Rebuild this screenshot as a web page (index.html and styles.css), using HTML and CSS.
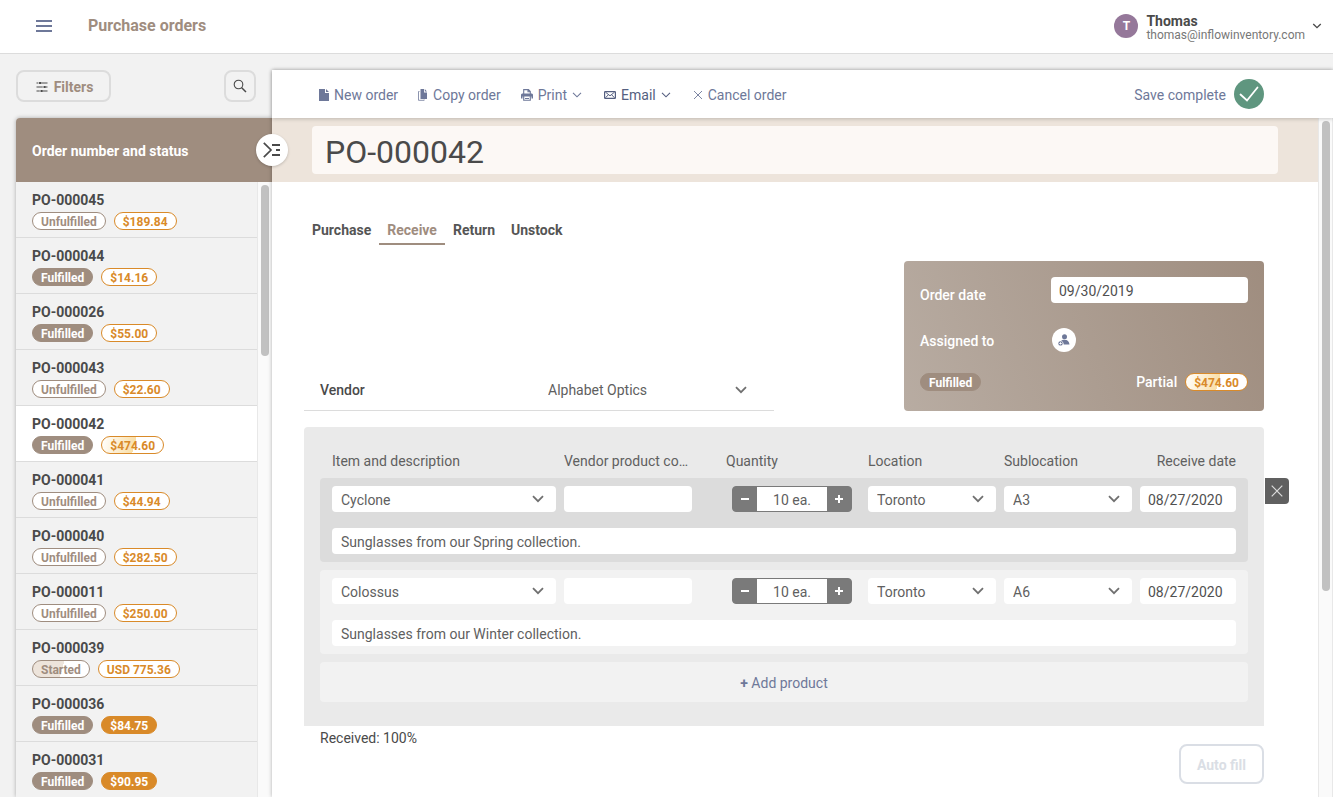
FILE: index.html
```html
<!DOCTYPE html>
<html lang="en">

<head>
    <meta charset="UTF-8">
    <meta name="viewport" content="width=device-width, initial-scale=1.0">
    <title>Purchase orders</title>
    <link rel="stylesheet" href="styles.css">
</head>

<body>
    <!-- shared icons -->
    <svg class="sprite" aria-hidden="true">
        <symbol id="chevron" viewBox="0 0 12 8">
            <path d="M1 1.2 6 6.2 11 1.2" fill="none" stroke="currentColor" stroke-width="1.8" />
        </symbol>
        <symbol id="chevron-thin" viewBox="0 0 10 6">
            <path d="M1 .8 5 4.8 9 .8" fill="none" stroke="currentColor" stroke-width="1.1" />
        </symbol>
        <symbol id="cross" viewBox="0 0 12 12">
            <path d="M.7.7 11.3 11.3M11.3.7.7 11.3" fill="none" stroke="currentColor" stroke-width="1.2" />
        </symbol>
        <symbol id="minus" viewBox="0 0 8 8">
            <path d="M0 4h8" stroke="currentColor" stroke-width="2" />
        </symbol>
        <symbol id="plus" viewBox="0 0 8 8">
            <path d="M0 4h8M4 0v8" stroke="currentColor" stroke-width="2" />
        </symbol>
    </svg>

    <header class="topbar">
        <button class="menu-btn" aria-label="Menu">
            <svg width="16" height="12" viewBox="0 0 16 12"><path d="M0 1h16M0 6h16M0 11h16" stroke="currentColor" stroke-width="2" /></svg>
        </button>
        <h1>Purchase orders</h1>
        <button class="user">
            <span class="avatar">T</span>
            <span class="user-info">
                <strong>Thomas</strong>
                <span class="email">thomas@inflowinventory.com</span>
            </span>
            <svg class="user-chevron" width="10" height="6"><use href="#chevron" /></svg>
        </button>
    </header>

    <div class="container">
        <aside>
            <div class="search-bar">
                <button class="outline-btn filter-btn">
                    <svg width="12" height="10" viewBox="0 0 12 10">
                        <path d="M.5 1h11M.5 5h11M.5 9h11" stroke="#4a4a4a" stroke-width="1.1" />
                        <path d="M4 0v2M8.5 4v2M5.5 8v2" stroke="#4a4a4a" stroke-width="2" />
                        <path d="M2.6 0v2M7.1 4v2M4.1 8v2" stroke="#f2f2f2" stroke-width="0.6" />
                    </svg>
                    Filters
                </button>
                <button class="outline-btn search-btn" aria-label="Search">
                    <svg width="14" height="14" viewBox="0 0 14 14" fill="none" stroke="#4a4a4a">
                        <circle cx="5.5" cy="5.5" r="4.3" stroke-width="1.1" />
                        <path d="m8.7 8.7 4.3 4.3" stroke-width="1.5" />
                    </svg>
                </button>
            </div>
            <div class="list-panel">
                <h2>Order number and status</h2>
                <div class="list-body">
                    <ul class="orders">
                        <li><a href="#"><b>PO-000045</b><span class="pills"><span class="pill brown">Unfulfilled</span><span class="pill orange">$189.84</span></span></a></li>
                        <li><a href="#"><b>PO-000044</b><span class="pills"><span class="pill brown full">Fulfilled</span><span class="pill orange">$14.16</span></span></a></li>
                        <li><a href="#"><b>PO-000026</b><span class="pills"><span class="pill brown full">Fulfilled</span><span class="pill orange">$55.00</span></span></a></li>
                        <li><a href="#"><b>PO-000043</b><span class="pills"><span class="pill brown">Unfulfilled</span><span class="pill orange">$22.60</span></span></a></li>
                        <li class="active"><a href="#"><b>PO-000042</b><span class="pills"><span class="pill brown full">Fulfilled</span><span class="pill orange part">$474.60</span></span></a></li>
                        <li><a href="#"><b>PO-000041</b><span class="pills"><span class="pill brown">Unfulfilled</span><span class="pill orange">$44.94</span></span></a></li>
                        <li><a href="#"><b>PO-000040</b><span class="pills"><span class="pill brown">Unfulfilled</span><span class="pill orange">$282.50</span></span></a></li>
                        <li><a href="#"><b>PO-000011</b><span class="pills"><span class="pill brown">Unfulfilled</span><span class="pill orange">$250.00</span></span></a></li>
                        <li><a href="#"><b>PO-000039</b><span class="pills"><span class="pill brown part">Started</span><span class="pill orange">USD 775.36</span></span></a></li>
                        <li><a href="#"><b>PO-000036</b><span class="pills"><span class="pill brown full">Fulfilled</span><span class="pill orange full">$84.75</span></span></a></li>
                        <li><a href="#"><b>PO-000031</b><span class="pills"><span class="pill brown full">Fulfilled</span><span class="pill orange full">$90.95</span></span></a></li>
                    </ul>
                    <div class="scroll-track"><div class="scroll-thumb list-thumb"></div></div>
                </div>
            </div>
        </aside>

        <main>
            <button class="toggle-btn" aria-label="Expand list">
                <svg width="18" height="16" viewBox="0 0 18 16" fill="none" stroke="#4a4a4a">
                    <path d="m.8.800 7.200 7.200L.8 15.200" stroke-width="1.700" />
                    <path d="M9 3h8M13 8h4M9 13h8" stroke-width="2" />
                </svg>
            </button>

            <div class="toolbar">
                <button>
                    <svg width="10" height="12" viewBox="0 0 10 12" fill="currentColor"><path d="M0 0h6v4h4v8H0zM7 0l3 3H7z" /></svg>
                    New order
                </button>
                <button>
                    <svg width="10" height="12" viewBox="0 0 10 12">
                        <path d="M2.500 0H6v3.500h3V10H2.500zM6.800 0 9 2.600H6.800z" fill="currentColor" />
                        <path d="M1.500 2.500H.5v8.800h5.700V10.500" fill="none" stroke="currentColor" stroke-width=".8" />
                    </svg>
                    Copy order
                </button>
                <button>
                    <svg width="12" height="12" viewBox="0 0 12 12">
                        <path d="M0 5.500 1 4.500h10l1 1V9.500h-1.500V7.500h-9V9.500H0z" fill="currentColor" />
                        <path d="M2.700 5V.6h4.800L9.300 2.500V5M2.700 7v4.300h6.600V7M7 .6v2.200h2.300M4 9.500h4" fill="none" stroke="currentColor" stroke-width="1.100" />
                    </svg>
                    Print
                    <svg class="caret" width="10" height="6"><use href="#chevron-thin" /></svg>
                </button>
                <button class="strong">
                    <svg width="12" height="8" viewBox="0 0 12 8" fill="none" stroke="currentColor">
                        <rect x=".6" y=".6" width="10.800" height="6.800" rx=".6" stroke-width="1.200" />
                        <path d="m1.500 1.200 4.500 3.600 4.500-3.600M1.500 6.800l2.800-3M10.500 6.800l-2.800-3" />
                    </svg>
                    Email
                    <svg class="caret" width="10" height="6"><use href="#chevron-thin" /></svg>
                </button>
                <button>
                    <svg width="10" height="10" viewBox="0 0 10 10"><path d="m1 1 8 8M9 1 1 9" stroke="currentColor" stroke-width=".9" /></svg>
                    Cancel order
                </button>
                <span class="saved">
                    <span>Save complete</span>
                    <svg width="30" height="30" viewBox="0 0 30 30"><circle cx="15" cy="15" r="15" fill="#5f967f" /><path d="M6.500 15.500 13 21.500 23.500 8.500" fill="none" stroke="#fff" stroke-width="1.800" stroke-linecap="round" /></svg>
                </span>
            </div>

            <div class="main-body">
                <div class="page">
                    <div class="title-band">
                        <input type="text" value="PO-000042" aria-label="Order number">
                    </div>

                    <div class="content">
                        <nav class="tabs">
                            <a href="#">Purchase</a>
                            <a href="#" class="current">Receive</a>
                            <a href="#">Return</a>
                            <a href="#">Unstock</a>
                        </nav>

                        <div class="info">
                            <div class="vendor">
                                <label for="vendor">Vendor</label>
                                <div class="select-box">
                                    <select id="vendor"><option>Alphabet Optics</option></select>
                                    <svg width="12" height="8"><use href="#chevron" /></svg>
                                </div>
                            </div>
                            <div class="card">
                                <div class="card-row date-row">
                                    <label for="order-date">Order date</label>
                                    <input class="field" id="order-date" type="text" value="09/30/2019">
                                </div>
                                <div class="card-row assign-row">
                                    <span>Assigned to</span>
                                    <button class="assign-btn" aria-label="Assign">
                                        <svg width="12" height="12" viewBox="0 0 12 12" fill="#6e7899">
                                            <circle cx="6.500" cy="2.800" r="2.500" />
                                            <path d="M3 7C3.800 6 5 5.700 6.500 5.700c3 0 4.700 1.600 5 4.800H5.700C5.700 8.500 4.500 7 3 7z" />
                                            <path fill-rule="evenodd" d="M2.500 7.200a2.200 2.200 0 1 1 0 4.400 2.200 2.200 0 0 1 0-4.400zM2 8.200v.7h-.7v1H2v.700h1v-.7h.7v-1H3v-.7z" />
                                        </svg>
                                    </button>
                                </div>
                                <div class="card-row status-row">
                                    <span class="pill brown full">Fulfilled</span>
                                    <span class="partial">Partial <span class="pill orange part">$474.60</span></span>
                                </div>
                            </div>
                        </div>

                        <div class="items">
                            <table>
                                <thead>
                                    <tr>
                                        <th>Item and description</th>
                                        <th>Vendor product code</th>
                                        <th class="qty-head">Quantity</th>
                                        <th>Location</th>
                                        <th>Sublocation</th>
                                        <th class="right">Receive date</th>
                                    </tr>
                                </thead>
                                <tbody class="selected">
                                    <tr>
                                        <td><div class="select-box"><select class="field" aria-label="Item"><option>Cyclone</option></select><svg width="12" height="8"><use href="#chevron" /></svg></div></td>
                                        <td><input class="field" type="text" aria-label="Vendor product code"></td>
                                        <td class="qty-cell"><div class="qty"><button aria-label="Less"><svg width="8" height="8"><use href="#minus" /></svg></button><input type="text" value="10 ea." aria-label="Quantity"><button aria-label="More"><svg width="8" height="8"><use href="#plus" /></svg></button></div></td>
                                        <td><div class="select-box"><select class="field" aria-label="Location"><option>Toronto</option></select><svg width="12" height="8"><use href="#chevron" /></svg></div></td>
                                        <td><div class="select-box"><select class="field" aria-label="Sublocation"><option>A3</option></select><svg width="12" height="8"><use href="#chevron" /></svg></div></td>
                                        <td><input class="field date" type="text" value="08/27/2020" aria-label="Receive date"></td>
                                    </tr>
                                    <tr>
                                        <td class="desc" colspan="6">
                                            <input class="field" type="text" value="Sunglasses from our Spring collection." aria-label="Description">
                                            <button class="remove-btn" aria-label="Remove"><svg width="12" height="12"><use href="#cross" /></svg></button>
                                        </td>
                                    </tr>
                                </tbody>
                                <tbody>
                                    <tr>
                                        <td><div class="select-box"><select class="field" aria-label="Item"><option>Colossus</option></select><svg width="12" height="8"><use href="#chevron" /></svg></div></td>
                                        <td><input class="field" type="text" aria-label="Vendor product code"></td>
                                        <td class="qty-cell"><div class="qty"><button aria-label="Less"><svg width="8" height="8"><use href="#minus" /></svg></button><input type="text" value="10 ea." aria-label="Quantity"><button aria-label="More"><svg width="8" height="8"><use href="#plus" /></svg></button></div></td>
                                        <td><div class="select-box"><select class="field" aria-label="Location"><option>Toronto</option></select><svg width="12" height="8"><use href="#chevron" /></svg></div></td>
                                        <td><div class="select-box"><select class="field" aria-label="Sublocation"><option>A6</option></select><svg width="12" height="8"><use href="#chevron" /></svg></div></td>
                                        <td><input class="field date" type="text" value="08/27/2020" aria-label="Receive date"></td>
                                    </tr>
                                    <tr>
                                        <td class="desc" colspan="6"><input class="field" type="text" value="Sunglasses from our Winter collection." aria-label="Description"></td>
                                    </tr>
                                </tbody>
                            </table>
                            <button class="add-btn"><b>+</b> Add product</button>
                        </div>

                        <div class="bottom">
                            <span>Received: 100%</span>
                            <button class="autofill" disabled>Auto fill</button>
                        </div>
                    </div>
                </div>
                <div class="scroll-track main-track"><div class="scroll-thumb main-thumb"></div></div>
            </div>
        </main>
    </div>
</body>

</html>
```
FILE: styles.css
```css
* {
    box-sizing: border-box;
}

body {
    margin: 0;
    height: 100vh;
    display: flex;
    flex-direction: column;
    overflow: hidden;
    background: #f2f2f2;
    color: #4a4a4a;
    font-family: Roboto, Arial, sans-serif;
    font-size: 14px;
    line-height: 20px;
}

button,
input,
select {
    font: inherit;
    color: inherit;
    margin: 0;
    border: none;
}

button {
    background: none;
    padding: 0;
    cursor: pointer;
}

a {
    color: inherit;
    text-decoration: none;
}

svg {
    flex: none;
}

.sprite {
    position: absolute;
    width: 0;
    height: 0;
}

/* top bar */
.topbar {
    flex: none;
    display: flex;
    align-items: center;
    height: 54px;
    padding: 0 11px 1px 28px;
    background: #fff;
    border-bottom: 1px solid #dcdcdc;
}

.menu-btn {
    display: flex;
    padding: 8px;
    color: #6e7899;
}

h1 {
    flex: 1;
    margin: 0 0 0 28px;
    font-size: 16px;
    font-weight: 700;
    color: #9f8d7f;
}

.user {
    display: flex;
    align-items: center;
    text-align: left;
}

.avatar {
    width: 24px;
    height: 24px;
    margin-right: 8px;
    border-radius: 50%;
    background: #95789a;
    color: #fff;
    font-size: 12px;
    font-weight: 700;
    line-height: 24px;
    text-align: center;
}

.user-info {
    display: flex;
    flex-direction: column;
    padding-top: 4px;
    line-height: 14px;
}

.email {
    font-size: 12px;
    color: #777;
}

.user-chevron {
    margin-left: 7px;
}

/* layout */
.container {
    flex: 1;
    display: flex;
    min-height: 0;
}

aside {
    flex: none;
    display: flex;
    flex-direction: column;
    width: 272px;
    padding: 16px 0 0 16px;
}

.search-bar {
    display: flex;
    justify-content: space-between;
    padding-right: 16px;
    margin-bottom: 16px;
}

.outline-btn {
    display: flex;
    align-items: center;
    justify-content: center;
    gap: 6px;
    height: 32px;
    border: 2px solid #dcdcdc;
    border-radius: 8px;
    color: #9f8d7f;
    font-weight: 700;
}

.filter-btn {
    width: 95px;
    padding: 2px 0 0 2px;
}

.search-btn {
    width: 32px;
}

.list-panel {
    flex: 1;
    display: flex;
    flex-direction: column;
    min-height: 0;
    border-radius: 4px 0 0 0;
    box-shadow: 0 0 4px rgba(0, 0, 0, 0.3);
}

h2 {
    flex: none;
    margin: 0;
    padding: 23px 16px 21px;
    border-radius: 4px 0 0 0;
    background: #9f8d7f;
    color: #fff;
    font-size: 14px;
    font-weight: 700;
}

.list-body {
    flex: 1;
    display: flex;
    min-height: 0;
}

.orders {
    flex: 1;
    margin: 0;
    padding: 0;
    overflow: hidden;
    list-style: none;
    background: #f2f2f2;
}

.orders li {
    border-bottom: 1px solid #dcdcdc;
}

.orders .active {
    background: #fff;
}

.orders a {
    display: block;
    padding: 8px 16px 7px;
}

.orders b {
    display: block;
    font-weight: 700;
}

.pills {
    display: flex;
    gap: 8px;
    margin-top: 2px;
}

.pill {
    height: 18px;
    padding: 0 8px;
    border: 1px solid;
    border-radius: 9px;
    background: #fff;
    font-size: 12px;
    font-weight: 700;
    line-height: 18px;
}

.brown {
    border-color: #9f8d7f;
    color: #9f8d7f;
}

.brown.full {
    background: #9f8d7f;
    color: #fff;
}

.brown.part {
    background: linear-gradient(105deg, #ede4db 52%, #fff 52%);
}

.orange {
    border-color: #d98a29;
    color: #d98a29;
}

.orange.full {
    background: #d98a29;
    color: #fff;
}

.orange.part {
    background: linear-gradient(105deg, #fff 0%, #f9dfa8 53%, #fff 53%);
}

.scroll-track {
    flex: none;
    width: 15px;
    padding: 3px 0 0 3px;
    border-left: 1px solid #e8e8e8;
    background: #fafafa;
}

.scroll-thumb {
    width: 8px;
    border-radius: 4px;
    background: #c1c1c1;
}

.list-thumb {
    height: 28%;
}

/* order panel */
main {
    position: relative;
    flex: 1;
    display: flex;
    flex-direction: column;
    min-width: 0;
    margin-top: 16px;
    background: #fff;
    box-shadow: 0 0 4px rgba(0, 0, 0, 0.3);
}

.toggle-btn {
    position: absolute;
    z-index: 2;
    top: 64px;
    left: -16px;
    display: flex;
    align-items: center;
    justify-content: center;
    width: 32px;
    height: 32px;
    border-radius: 50%;
    background: #fff;
    box-shadow: 0 1px 3px rgba(0, 0, 0, 0.2);
}

.toolbar {
    position: relative;
    z-index: 1;
    flex: none;
    display: flex;
    align-items: center;
    gap: 20px;
    height: 48px;
    padding: 0 69px 0 47px;
    box-shadow: 0 1px 4px rgba(0, 0, 0, 0.2);
    color: #6e7899;
}

.toolbar button {
    display: flex;
    align-items: center;
    gap: 5px;
    padding-top: 2px;
}

.toolbar .strong {
    color: #555f80;
}

.caret {
    margin-right: 2px;
}

.saved {
    display: flex;
    align-items: center;
    gap: 8px;
    margin-left: auto;
}

.saved span {
    padding-top: 2px;
}

.main-body {
    flex: 1;
    display: flex;
    min-height: 0;
}

.page {
    flex: 1;
    min-width: 0;
    overflow: hidden;
}

.title-band {
    padding: 8px 40px;
    background: #ede4db;
}

.title-band input {
    display: block;
    width: 100%;
    height: 48px;
    padding: 4px 13px 0;
    border-radius: 4px;
    background: #fcf8f5;
    font-size: 32px;
}

.content {
    padding: 36px 54px 0 32px;
}

.tabs {
    display: flex;
    color: #555;
    font-weight: 700;
}

.tabs a {
    padding: 2px 8px 3px;
    border-bottom: 2px solid transparent;
}

.tabs .current {
    border-color: #9f8d7f;
    color: #9f8d7f;
}

.info {
    display: flex;
    justify-content: space-between;
    align-items: flex-end;
    margin: 16px 0;
}

.vendor {
    display: flex;
    align-items: center;
    width: 470px;
    height: 41px;
    padding: 0 24px 0 16px;
    border-bottom: 1px solid #dcdcdc;
}

.vendor label {
    width: 228px;
    font-weight: 500;
}

.vendor .select-box {
    flex: 1;
}

.vendor select {
    color: #606060;
}

.card {
    width: 360px;
    padding: 16px 16px 19px;
    border-radius: 4px;
    background: linear-gradient(70deg, #b8aca2, #9f8d7f);
    color: #fff;
    font-weight: 500;
}

.card-row {
    display: flex;
    align-items: center;
}

.card-row label,
.assign-row span {
    width: 131px;
}

.card-row .field {
    flex: 1;
    min-width: 0;
    font-weight: 400;
}

.card-row label {
    padding-top: 10px;
}

.date-row {
    height: 26px;
}

.assign-row {
    margin: 25px 0 20px;
}

.assign-row span {
    padding-top: 2px;
}

.assign-btn {
    display: flex;
    align-items: center;
    justify-content: center;
    width: 24px;
    height: 24px;
    margin-left: 1px;
    border-radius: 50%;
    background: #fff;
}

.status-row {
    height: 20px;
    justify-content: space-between;
}

.partial {
    display: flex;
    align-items: center;
    gap: 8px;
}

/* item table */
.field {
    display: block;
    width: 100%;
    height: 26px;
    padding: 1px 9px 0;
    border-radius: 4px;
    background: #fff;
    color: #606060;
}

.date,
#order-date {
    padding: 1px 8px 0;
    color: #505050;
}

select {
    display: block;
    width: 100%;
    appearance: none;
    background: none;
}

.select-box {
    position: relative;
}

.select-box svg {
    position: absolute;
    top: 9px;
    right: 12px;
    color: #707070;
    pointer-events: none;
}

.vendor .select-box svg {
    top: 6px;
    right: 3px;
}

.items {
    padding: 24px 16px;
    border-radius: 4px 4px 0 0;
    background: #eaeaea;
}

table,
thead,
tbody {
    display: block;
}

thead {
    padding: 0 12px 7px;
    color: #606060;
}

tr {
    display: grid;
    grid-template-columns: minmax(0, 224fr) minmax(0, 128fr) minmax(0, 160fr) minmax(0, 128fr) minmax(0, 128fr) minmax(0, 96fr);
    gap: 8px;
}

th {
    padding: 0;
    overflow: hidden;
    font-weight: 400;
    text-align: left;
    text-overflow: ellipsis;
    white-space: nowrap;
}

.qty-head {
    padding-left: 26px;
}

th.right {
    text-align: right;
}

td {
    padding: 0;
}

tbody {
    position: relative;
    margin-bottom: 8px;
    padding: 8px 12px;
    border-radius: 4px;
    background: #f2f2f2;
}

.selected {
    background: #dcdcdc;
}

.desc {
    grid-column: 1 / -1;
    margin-top: 16px;
}

.qty-cell {
    padding: 0 8px 0 32px;
}

.qty {
    display: flex;
    height: 26px;
    border: 1px solid #7a7a7a;
    border-radius: 4px;
    background: #7a7a7a;
}

.qty button {
    display: flex;
    align-items: center;
    justify-content: center;
    width: 24px;
    color: #fff;
}

.qty input {
    flex: 1;
    min-width: 0;
    padding: 1px 0 0;
    color: #606060;
    text-align: center;
}

.remove-btn {
    position: absolute;
    top: 0;
    right: -41px;
    display: flex;
    align-items: center;
    justify-content: center;
    width: 24px;
    height: 26px;
    border-radius: 0 4px 4px 0;
    background: #606060;
    color: #dcdcdc;
}

.add-btn {
    width: 100%;
    height: 40px;
    padding-top: 2px;
    border-radius: 4px;
    background: #f2f2f2;
    color: #6e7899;
}

.bottom {
    display: flex;
    justify-content: space-between;
    padding: 2px 0 0 16px;
}

.autofill {
    height: 40px;
    margin-top: 16px;
    padding: 2px 16px 0;
    border: 2px solid #dadee5;
    border-radius: 8px;
    color: #dadee5;
    font-weight: 700;
}

.main-track {
    border-right: 1px solid #e8e8e8;
}

.main-thumb {
    height: 470px;
}
```
